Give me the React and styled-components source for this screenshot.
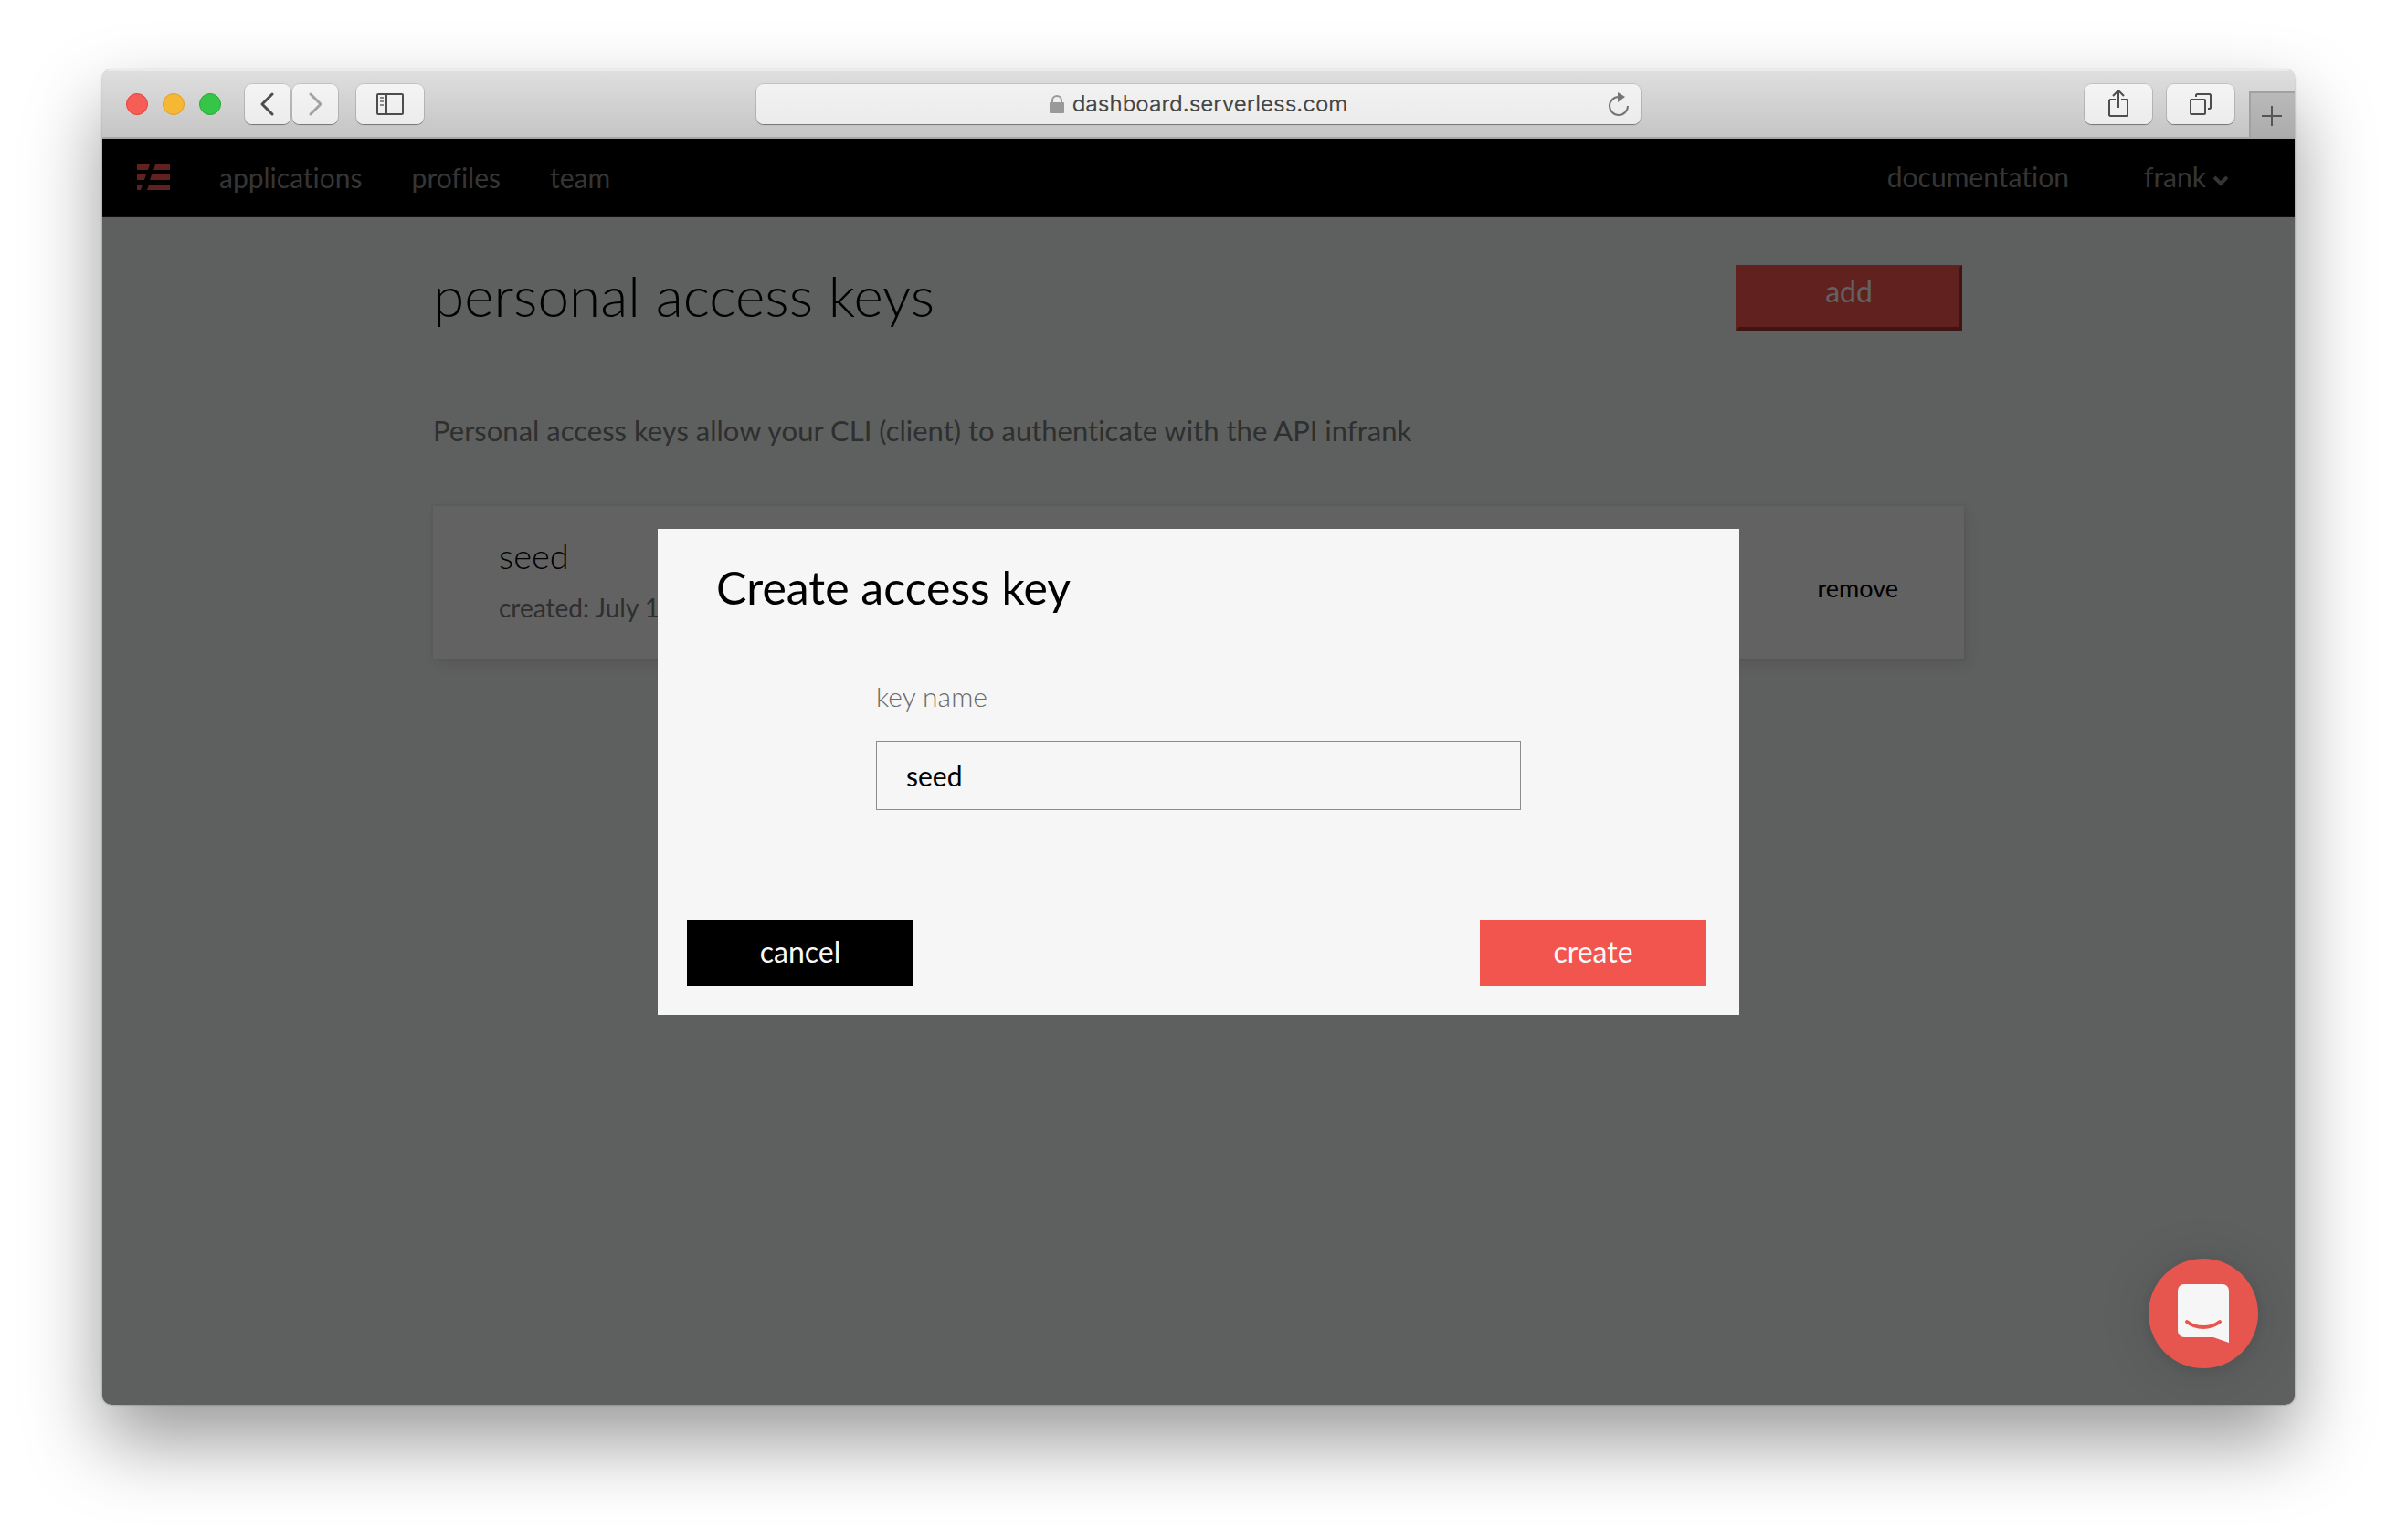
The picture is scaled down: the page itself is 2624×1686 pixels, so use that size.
import React, { useState } from "react";
import styled, { createGlobalStyle } from "styled-components";

const brand = "#f2544e";
const brandFont = 'Lato, "Open Sans", sans-serif';

const GlobalStyle = createGlobalStyle`
  *, *::before, *::after { box-sizing: border-box; }
  body { margin: 0; background: #fff; font-family: ${brandFont}; font-variant-ligatures: none; }
  button, input { font: inherit; font-variant-ligatures: none; margin: 0; }
  h1, h2, h3, p { margin: 0; }
`;

const Desktop = styled.div`
  display: flex;
  min-height: 100vh;
  padding: 76px 112px 148px;
`;

const BrowserWindow = styled.div`
  flex: 1;
  min-width: 0;
  display: flex;
  flex-direction: column;
  border-radius: 10px;
  overflow: hidden;
  box-shadow: 0 0 2px rgba(0, 0, 0, 0.45), 0 40px 84px rgba(0, 0, 0, 0.4);
`;

const Toolbar = styled.div`
  display: grid;
  grid-template-columns: 1fr minmax(0, 968px) 1fr;
  align-items: center;
  height: 76px;
  padding-top: 2px;
  background: linear-gradient(#dfdfdf, #c5c5c5);
  border-bottom: 2px solid #a6a6a6;
  box-shadow: inset 0 2px 0 #ebebeb;
`;

const ToolbarStart = styled.div`
  display: flex;
  align-items: center;
  gap: 20px;
  padding-left: 26px;
`;

const ToolbarEnd = styled.div`
  display: flex;
  justify-content: flex-end;
  align-items: center;
  align-self: stretch;
  gap: 16px;
`;

const TrafficLights = styled.div`
  display: flex;
  gap: 16px;
  margin-right: 6px;
`;

const Light = styled.button`
  width: 24px;
  height: 24px;
  padding: 0;
  border: 1px solid ${(p) => p.$edge};
  border-radius: 50%;
  background: ${(p) => p.$fill};
`;

const HistoryButtons = styled.div`
  display: flex;
  gap: 2px;
`;

const ChromeButton = styled.button`
  display: grid;
  place-items: center;
  width: ${(p) => (p.$narrow ? 50 : 74)}px;
  height: 44px;
  padding: 0;
  border: 0;
  border-radius: 8px;
  color: ${(p) => (p.$faded ? "#a3a3a3" : "#4d4d4d")};
  background: linear-gradient(#f4f4f4, #ececec);
  box-shadow: 0 0 0 1px rgba(0, 0, 0, 0.1), 0 1px 1px rgba(0, 0, 0, 0.35);
`;

const AddressBar = styled.div`
  display: flex;
  align-items: center;
  height: 44px;
  padding: 0 12px 0 36px;
  border-radius: 8px;
  background: linear-gradient(#f2f2f2, #ebebeb);
  box-shadow: 0 0 0 1px rgba(0, 0, 0, 0.1), 0 1px 1px rgba(0, 0, 0, 0.35);
`;

const Address = styled.div`
  flex: 1;
  display: flex;
  justify-content: center;
  align-items: center;
  gap: 9px;
  color: #464646;
  font: 24px/30px Inter, sans-serif;
`;

const PlainButton = styled.button`
  display: grid;
  place-items: center;
  padding: 0;
  border: 0;
  background: none;
  color: #757575;
`;

const NewTabButton = styled(PlainButton)`
  align-self: flex-end;
  width: 50px;
  height: 50px;
  padding: 2px 2px 0 0;
  border: solid #a1a1a1;
  border-width: 2px 0 0 2px;
  background: linear-gradient(#b9b9b9, #acacac);
  color: #555;
`;

const Viewport = styled.div`
  position: relative;
  flex: 1;
  background: #ebf0ee;
`;

const NavBar = styled.header`
  display: flex;
  justify-content: space-between;
  align-items: center;
  height: 86px;
  padding: 0 73px 0 38px;
  background: #000;
  border-bottom: 2px solid #242424;
`;

const NavGroup = styled.nav`
  display: flex;
  align-items: center;
  gap: ${(p) => p.$gap}px;
  padding-bottom: ${(p) => (p.$raised ? 2 : 0)}px;
`;

const NavLink = styled.a`
  color: #858585;
  font-size: 30px;
  line-height: 34px;
  text-decoration: none;
`;

const LogoLink = styled.a`
  display: block;
  height: 28px;
`;

const AccountButton = styled.button`
  display: flex;
  align-items: center;
  gap: 8px;
  padding: 0;
  border: 0;
  background: none;
  color: #858585;
  font-size: 30px;
  line-height: 34px;
`;

const Content = styled.main`
  width: 70%;
  max-width: 1676px;
  margin: 0 auto;
  padding: 52px 0;
`;

const PageHeader = styled.div`
  display: flex;
  justify-content: space-between;
  align-items: flex-start;
  padding-right: 2px;
`;

const PageTitle = styled.h1`
  font-weight: 300;
  font-size: 62px;
  line-height: 66px;
`;

const AddButton = styled.button`
  width: 248px;
  height: 72px;
  padding: 0 0 14px;
  border: 4px solid;
  border-color: ${brand} #9e3633 #9e3633 ${brand};
  background: ${brand};
  color: #f6f6f6;
  font-size: 32px;
  line-height: 36px;
`;

const Intro = styled.p`
  margin-top: 92px;
  color: #757575;
  font-size: 31px;
  line-height: 34px;
`;

const KeyCard = styled.article`
  display: flex;
  justify-content: space-between;
  align-items: center;
  height: 168px;
  margin-top: 66px;
  padding: 32px 72px 40px;
  background: #f4f4f4;
  box-shadow: 0 0 0 2px rgba(120, 110, 110, 0.06), 4px 6px 16px rgba(60, 30, 30, 0.1);
`;

const KeyName = styled.h2`
  font-weight: 300;
  font-size: 38px;
  line-height: 44px;
`;

const KeyCreated = styled.p`
  margin-top: 18px;
  color: #757575;
  font-size: 28px;
  line-height: 34px;
`;

const RemoveButton = styled.button`
  padding: 20px 0 0;
  border: 0;
  background: none;
  color: #000;
  font-size: 27px;
  line-height: 34px;
`;

const Overlay = styled.div`
  position: absolute;
  inset: 0;
  display: grid;
  place-items: center;
  background: rgba(0, 0, 0, 0.6);
`;

const Dialog = styled.form`
  display: flex;
  flex-direction: column;
  width: 1184px;
  max-width: 100%;
  padding: 36px 36px 32px 32px;
  background: #f6f6f6;
`;

const DialogTitle = styled.h2`
  padding-left: 32px;
  font-weight: 400;
  font-size: 50px;
  line-height: 56px;
`;

const Field = styled.div`
  display: flex;
  flex-direction: column;
  gap: 32px;
  width: 706px;
  max-width: 100%;
  margin: 74px 0 120px 207px;
`;

const FieldLabel = styled.label`
  color: #6b6b6b;
  font-weight: 300;
  font-size: 30px;
  line-height: 34px;
`;

const TextInput = styled.input`
  height: 76px;
  padding: 0 32px;
  border: 1px solid #8c8c8c;
  border-radius: 0;
  outline: 0;
  background: transparent;
  color: #000;
  font-size: 30px;
`;

const DialogActions = styled.div`
  display: flex;
  justify-content: space-between;
`;

const ActionButton = styled.button`
  width: 248px;
  height: 72px;
  padding: 0 0 2px;
  border: 0;
  background: ${(p) => (p.$primary ? brand : "#000")};
  color: #f8f8f8;
  font-size: 32px;
  line-height: 36px;
`;

const ChatLauncher = styled.button`
  position: absolute;
  right: 40px;
  bottom: 40px;
  display: grid;
  place-items: center;
  width: 120px;
  height: 120px;
  padding: 0;
  border: 0;
  border-radius: 50%;
  background: #e6564e;
  box-shadow: 0 2px 12px rgba(0, 0, 0, 0.08), 0 4px 60px rgba(0, 0, 0, 0.12);
`;

const Chevron = ({ flip }) => (
  <svg width="16" height="30" viewBox="0 0 16 30" fill="none" stroke="currentColor" strokeWidth="3" strokeLinecap="round" strokeLinejoin="round">
    <path d={flip ? "M3 4 14 15 3 26" : "M13 4 2 15 13 26"} />
  </svg>
);

const SidebarIcon = () => (
  <svg width="30" height="24" viewBox="0 0 30 24" fill="none" stroke="currentColor" strokeWidth="2">
    <rect x="1" y="1" width="28" height="22" rx="1" />
    <path d="M11 1v22" />
    <path d="M4 5h4M4 9h4M4 13h4" stroke="#888" />
  </svg>
);

const LockIcon = () => (
  <svg width="16" height="20" viewBox="0 0 16 20">
    <path d="M3 9V6a5 5 0 0 1 10 0v3" fill="none" stroke="#999" strokeWidth="2" />
    <rect y="8" width="16" height="12" rx="1" fill="#999" />
  </svg>
);

const ReloadIcon = () => (
  <svg width="24" height="28" viewBox="0 0 24 28">
    <path d="M12 6a10 10 0 1 0 10 10" fill="none" stroke="currentColor" strokeWidth="2" />
    <path d="M11 1v11l8-6z" fill="currentColor" />
  </svg>
);

const ShareIcon = () => (
  <svg width="22" height="32" viewBox="0 0 22 32" fill="none" stroke="currentColor" strokeWidth="2">
    <path d="M8 11H2l-1 1v16l1 1h18l1-1V12l-1-1h-6M11 20V1M5 7l6-6 6 6" />
  </svg>
);

const TabsIcon = () => (
  <svg width="24" height="24" viewBox="0 0 24 24" fill="none" stroke="currentColor" strokeWidth="2">
    <rect x="1" y="7" width="16" height="16" rx="1" />
    <path d="M7 4V2l1-1h14l1 1v14l-1 1h-2" />
  </svg>
);

const PlusIcon = () => (
  <svg width="22" height="22" viewBox="0 0 22 22" stroke="currentColor" strokeWidth="2">
    <path d="M11 0v22M0 11h22" />
  </svg>
);

const Logo = () => (
  <svg width="36" height="28" viewBox="0 0 36 28" fill={brand}>
    <path d="M0 0h14l-2 6H0zM20 0h16v6H18zM0 11h10l-2 6H0zM16 11h20v6H14zM0 22h6l-2 6H0zM13 22h23v6H11z" />
  </svg>
);

const CaretIcon = () => (
  <svg width="16" height="24" viewBox="0 0 16 24" fill="none" stroke="currentColor" strokeWidth="4">
    <path d="m1 13 7 7 7-7" />
  </svg>
);

const ChatIcon = () => (
  <svg width="56" height="64" viewBox="0 0 56 64">
    <path d="M7 0h42a7 7 0 0 1 7 7v57l-17-6H7a7 7 0 0 1-7-7V7a7 7 0 0 1 7-7z" fill="#f6f6f6" />
    <path d="M10 41c10 8 26 8 36 0" fill="none" stroke="#e6564e" strokeWidth="4" strokeLinecap="round" />
  </svg>
);

const lights = [
  { name: "Close", fill: "#f65d56", edge: "#e2463f" },
  { name: "Minimize", fill: "#f6b734", edge: "#dd9f2b" },
  { name: "Zoom", fill: "#35c648", edge: "#2aa838" },
];

const sections = ["applications", "profiles", "team"];

export default function App() {
  const [keyName, setKeyName] = useState("seed");

  return (
    <Desktop>
      <GlobalStyle />
      <BrowserWindow>
        <Toolbar>
          <ToolbarStart>
            <TrafficLights>
              {lights.map((l) => (
                <Light key={l.name} aria-label={l.name} $fill={l.fill} $edge={l.edge} />
              ))}
            </TrafficLights>
            <HistoryButtons>
              <ChromeButton $narrow aria-label="Back"><Chevron /></ChromeButton>
              <ChromeButton $narrow $faded aria-label="Forward"><Chevron flip /></ChromeButton>
            </HistoryButtons>
            <ChromeButton aria-label="Sidebar"><SidebarIcon /></ChromeButton>
          </ToolbarStart>
          <AddressBar>
            <Address>
              <LockIcon />
              <span>dashboard.serverless.com</span>
            </Address>
            <PlainButton aria-label="Reload"><ReloadIcon /></PlainButton>
          </AddressBar>
          <ToolbarEnd>
            <ChromeButton aria-label="Share"><ShareIcon /></ChromeButton>
            <ChromeButton aria-label="Show all tabs"><TabsIcon /></ChromeButton>
            <NewTabButton aria-label="New tab"><PlusIcon /></NewTabButton>
          </ToolbarEnd>
        </Toolbar>

        <Viewport>
          <NavBar>
            <NavGroup $gap={54}>
              <LogoLink href="#" aria-label="Home"><Logo /></LogoLink>
              {sections.map((s) => (
                <NavLink key={s} href={`#${s}`}>{s}</NavLink>
              ))}
            </NavGroup>
            <NavGroup $gap={82} $raised>
              <NavLink href="#documentation">documentation</NavLink>
              <AccountButton>frank <CaretIcon /></AccountButton>
            </NavGroup>
          </NavBar>

          <Content>
            <PageHeader>
              <PageTitle>personal access keys</PageTitle>
              <AddButton>add</AddButton>
            </PageHeader>
            <Intro>
              Personal access keys allow your CLI (client) to authenticate with the API infrank
            </Intro>
            <KeyCard>
              <div>
                <KeyName>seed</KeyName>
                <KeyCreated>created: July 1</KeyCreated>
              </div>
              <RemoveButton>remove</RemoveButton>
            </KeyCard>
          </Content>

          <Overlay>
            <Dialog role="dialog" aria-labelledby="dialog-title" onSubmit={(e) => e.preventDefault()}>
              <DialogTitle id="dialog-title">Create access key</DialogTitle>
              <Field>
                <FieldLabel htmlFor="key-name">key name</FieldLabel>
                <TextInput id="key-name" type="text" value={keyName} onChange={(e) => setKeyName(e.target.value)} />
              </Field>
              <DialogActions>
                <ActionButton type="button">cancel</ActionButton>
                <ActionButton type="submit" $primary>create</ActionButton>
              </DialogActions>
            </Dialog>
          </Overlay>

          <ChatLauncher aria-label="Open chat"><ChatIcon /></ChatLauncher>
        </Viewport>
      </BrowserWindow>
    </Desktop>
  );
}
